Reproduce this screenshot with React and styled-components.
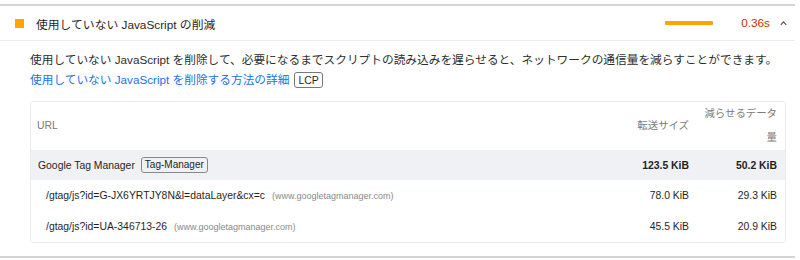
import React from 'react'
import styled, { createGlobalStyle } from 'styled-components'

const Global = createGlobalStyle`
body {
  margin: 0;
  background: #fff;
  font-family: "Liberation Sans", "Noto Sans CJK JP", sans-serif;
  color: #1f1f1f;
}
`

const Page = styled.div`
padding: 4px 5px 0 0;
`

const Audit = styled.section`
border-top: 2px solid #d4d4d4;
border-bottom: 2px solid #d4d4d4;
padding-bottom: 13px;
`

const Header = styled.div`
display: flex;
align-items: center;
height: 34px;
padding: 0 8px 0 15px;
border-bottom: 1px solid #ececec;
`

const Square = styled.span`
width: 9px;
height: 9px;
background: #ffa400;
margin-right: 12px;
flex-shrink: 0;
`

const Title = styled.div`
flex: 1;
font-size: 11.8px;
color: #1f1f1f;
`

const Bar = styled.span`
width: 48px;
height: 4px;
background: #ffa400;
border-radius: 1px;
margin-right: 28px;
`

const Value = styled.span`
font-size: 11.8px;
color: #c33300;
margin-right: 10px;
`

const Body = styled.div`
padding: 9px 9px 0 30px;
`

const Desc = styled.p`
margin: 0;
font-size: 11.7px;
line-height: 20px;
color: #2e2e2e;
`

const LinkLine = styled.div`
display: flex;
align-items: center;
gap: 5px;
font-size: 11.7px;
line-height: 20px;
`

const DocLink = styled.a`
color: #1a73e8;
text-decoration: none;
`

const Badge = styled.span`
display: inline-flex;
align-items: center;
height: 14px;
padding: 0 3px;
border: 1px solid ${p => p.$border || '#777'};
border-radius: 3px;
font-size: ${p => p.$size || '10.5px'};
color: #1f1f1f;
line-height: 1;
margin-left: ${p => p.$gap || '0'};
`

const Table = styled.div`
margin-top: 11px;
border: 1px solid #ebebeb;
border-radius: 3px;
display: grid;
grid-template-columns: 1fr 96px 88px;
font-size: 10.4px;
`

const Row = styled.div`
display: contents;
`

const Cell = styled.div`
display: flex;
align-items: center;
height: ${p => p.$h}px;
background: ${p => (p.$shade ? '#f0f1f4' : '#fff')};
justify-content: ${p => (p.$num ? 'flex-end' : 'flex-start')};
text-align: ${p => (p.$num ? 'right' : 'left')};
padding: ${p => (p.$num ? '0 8px 0 0' : `0 0 0 ${p.$indent || 6}px`)};
color: ${p => (p.$head ? '#7a7a7a' : '#1f1f1f')};
font-weight: ${p => (p.$bold ? 'bold' : 'normal')};
line-height: ${p => (p.$head ? '24px' : 'normal')};
`

const Domain = styled.span`
font-size: 9px;
color: #8a8a8a;
margin-left: 7px;
`

const Chevron = () => (
  <svg width="7" height="6" viewBox="0 0 7 6">
    <polyline points="0.8,4.8 3.5,1.8 6.2,4.8" fill="none" stroke="#555" strokeWidth="1.2" />
  </svg>
)

const items = [
  { url: '/gtag/js?id=G-JX6YRTJY8N&l=dataLayer&cx=c', size: '78.0 KiB', saved: '29.3 KiB' },
  { url: '/gtag/js?id=UA-346713-26', size: '45.5 KiB', saved: '20.9 KiB' },
]

export default function App() {
  return (
    <Page>
      <Global />
      <Audit>
        <Header>
          <Square />
          <Title>使用していない JavaScript の削減</Title>
          <Bar />
          <Value>0.36s</Value>
          <Chevron />
        </Header>
        <Body>
          <Desc>
            使用していない JavaScript を削除して、必要になるまでスクリプトの読み込みを遅らせると、ネットワークの通信量を減らすことができます。
          </Desc>
          <LinkLine>
            <DocLink href="#">使用していない JavaScript を削除する方法の詳細</DocLink>
            <Badge>LCP</Badge>
          </LinkLine>
          <Table>
            <Row>
              <Cell $h={48} $head>URL</Cell>
              <Cell $h={48} $head $num>転送サイズ</Cell>
              <Cell $h={48} $head $num>減らせるデータ量</Cell>
            </Row>
            <Row>
              <Cell $h={30} $shade $indent={7}>
                Google Tag Manager
                <Badge $gap="6px" $size="10px" $border="#888">Tag-Manager</Badge>
              </Cell>
              <Cell $h={30} $shade $num $bold>123.5 KiB</Cell>
              <Cell $h={30} $shade $num $bold>50.2 KiB</Cell>
            </Row>
            {items.map(it => (
              <Row key={it.url}>
                <Cell $h={31} $indent={15}>
                  {it.url}
                  <Domain>(www.googletagmanager.com)</Domain>
                </Cell>
                <Cell $h={31} $num>{it.size}</Cell>
                <Cell $h={31} $num>{it.saved}</Cell>
              </Row>
            ))}
          </Table>
        </Body>
      </Audit>
    </Page>
  )
}
